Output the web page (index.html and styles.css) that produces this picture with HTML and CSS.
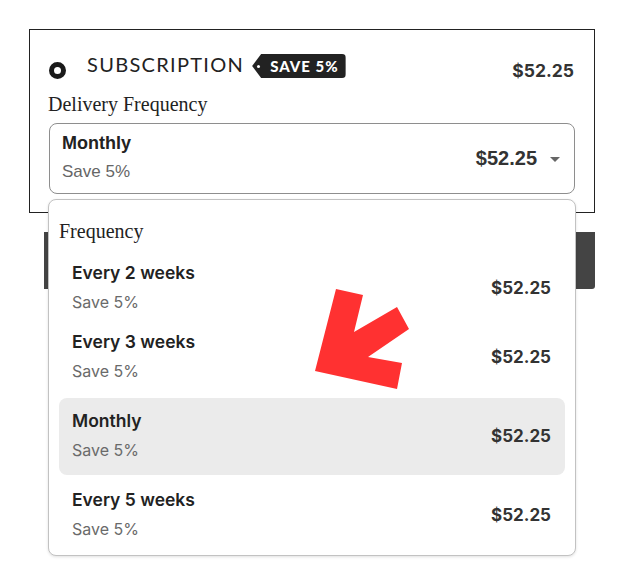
FILE: index.html
```html
<!DOCTYPE html>
<html lang="en">
<head>
<meta charset="utf-8">
<title>Subscription</title>
<link rel="stylesheet" href="styles.css">
</head>
<body>
<div class="page">
  <section class="plan">
    <div class="plan-head">
      <span class="radio"></span>
      <span class="plan-name">SUBSCRIPTION</span>
      <span class="badge">SAVE 5%</span>
      <span class="plan-price">$52.25</span>
    </div>
    <div class="field-label">Delivery Frequency</div>
    <div class="field">
      <div class="trigger">
        <div class="trigger-text">
          <div class="trigger-title">Monthly</div>
          <div class="trigger-sub">Save 5%</div>
        </div>
        <span class="trigger-price">$52.25</span>
        <span class="caret"></span>
      </div>
      <div class="menu">
        <div class="menu-head">Frequency</div>
        <div class="option">
          <div class="option-text">
            <div class="option-title">Every 2 weeks</div>
            <div class="option-sub">Save 5%</div>
          </div>
          <span class="option-price">$52.25</span>
        </div>
        <div class="option">
          <div class="option-text">
            <div class="option-title">Every 3 weeks</div>
            <div class="option-sub">Save 5%</div>
          </div>
          <span class="option-price">$52.25</span>
        </div>
        <div class="option selected">
          <div class="option-text">
            <div class="option-title">Monthly</div>
            <div class="option-sub">Save 5%</div>
          </div>
          <span class="option-price">$52.25</span>
        </div>
        <div class="option last">
          <div class="option-text">
            <div class="option-title">Every 5 weeks</div>
            <div class="option-sub">Save 5%</div>
          </div>
          <span class="option-price">$52.25</span>
        </div>
      </div>
    </div>
  </section>
  <div class="cart-bar"></div>
</div>
<svg class="arrow" width="623" height="578" viewBox="0 0 623 578" aria-hidden="true">
  <polygon points="336,289 363,295 354,332 397,307 409,329 368,357 402,363 397,389 315,371" fill="#ff3131"/>
</svg>
</body>
</html>
```
FILE: styles.css
```css
html, body {
  margin: 0;
  background: #fff;
}
body {
  font-family: "Inter", "Liberation Sans", sans-serif;
  color: #222;
  position: relative;
  min-height: 578px;
}
.page {
  padding: 29px 0 290px 29px;
  width: 566px;
}
.plan {
  border: 1px solid #222;
  padding: 24px 19px 18px 19px;
}
.plan-head {
  display: flex;
  align-items: center;
  height: 30px;
}
.radio {
  width: 17px;
  height: 17px;
  box-sizing: border-box;
  border: 5px solid #1a1a1a;
  border-radius: 50%;
  margin-top: 2px;
  margin-right: 21px;
  flex: none;
}
.plan-name {
  font-family: "Lato", sans-serif;
  font-weight: 400;
  font-size: 20px;
  letter-spacing: 1.3px;
  color: #222;
  margin-top: -10px;
}
.badge {
  position: relative;
  margin-left: 8px;
  margin-top: -6px;
  height: 24px;
  box-sizing: border-box;
  padding: 0 7px 0 18px;
  display: flex;
  align-items: center;
  background: #222;
  color: #fff;
  font-family: "Lato", sans-serif;
  font-weight: 900;
  font-size: 15px;
  letter-spacing: 1px;
  border-radius: 0 4px 4px 0;
  clip-path: polygon(9px 0, 100% 0, 100% 100%, 9px 100%, 0 50%);
}
.badge::before {
  content: "";
  position: absolute;
  left: 5px;
  top: 10.5px;
  width: 3px;
  height: 3px;
  border-radius: 50%;
  background: #fff;
}
.plan-price {
  margin-left: auto;
  margin-right: 1px;
  margin-top: 2px;
  font-weight: 700;
  font-size: 17.5px;
  color: #333;
}
.field-label {
  font-family: "Liberation Serif", serif;
  font-size: 20px;
  line-height: 22px;
  color: #222;
  margin: 9px 0 8px -1px;
}
.field {
  position: relative;
}
.trigger {
  display: flex;
  align-items: center;
  border: 1px solid #8e8e8e;
  border-radius: 8px;
  padding: 8px 14px 11px 12px;
  font-family: "Liberation Sans", Arial, sans-serif;
}
.trigger-text {
  flex: 1;
}
.trigger-title {
  font-size: 18px;
  line-height: 22px;
  font-weight: 700;
  color: #222;
}
.trigger-sub {
  font-size: 17px;
  line-height: 20px;
  color: #666;
  margin-top: 8px;
}
.trigger-price {
  font-size: 20px;
  font-weight: 700;
  color: #333;
  margin-right: 13px;
  margin-top: 3px;
}
.caret {
  width: 0;
  height: 0;
  border-left: 5px solid transparent;
  border-right: 5px solid transparent;
  border-top: 5px solid #666;
  margin-top: 5px;
}
.menu {
  position: absolute;
  top: calc(100% + 5px);
  left: -1px;
  right: -1px;
  background: #fff;
  border: 1px solid #c2c2c2;
  border-radius: 8px;
  box-shadow: 0 1px 3px rgba(0, 0, 0, 0.12);
  padding: 20px 10px 1px 10px;
  z-index: 2;
}
.menu-head {
  font-family: "Liberation Serif", serif;
  font-size: 20px;
  line-height: 22px;
  color: #222;
  margin-bottom: 8px;
}
.option {
  display: flex;
  align-items: center;
  padding: 12px 14px 6px 13px;
  border-radius: 8px;
}
.option.selected {
  background: #ebebeb;
  padding-bottom: 14px;
  margin-top: 10px;
}
.option.last {
  padding-bottom: 14px;
  margin-top: 2px;
}
.option-text {
  flex: 1;
}
.option-title {
  font-size: 17.5px;
  line-height: 22px;
  font-weight: 600;
  color: #222;
}
.option-sub {
  font-size: 16px;
  line-height: 22px;
  color: #6a6a6a;
  margin-top: 7px;
}
.option-price {
  font-size: 17px;
  font-weight: 700;
  color: #333;
}
.cart-bar {
  margin: 19px 0 0 15px;
  height: 57px;
  background: #444;
  border-radius: 0 0 3px 0;
}
.arrow {
  position: absolute;
  left: 0;
  top: 0;
  z-index: 5;
  pointer-events: none;
}
```
